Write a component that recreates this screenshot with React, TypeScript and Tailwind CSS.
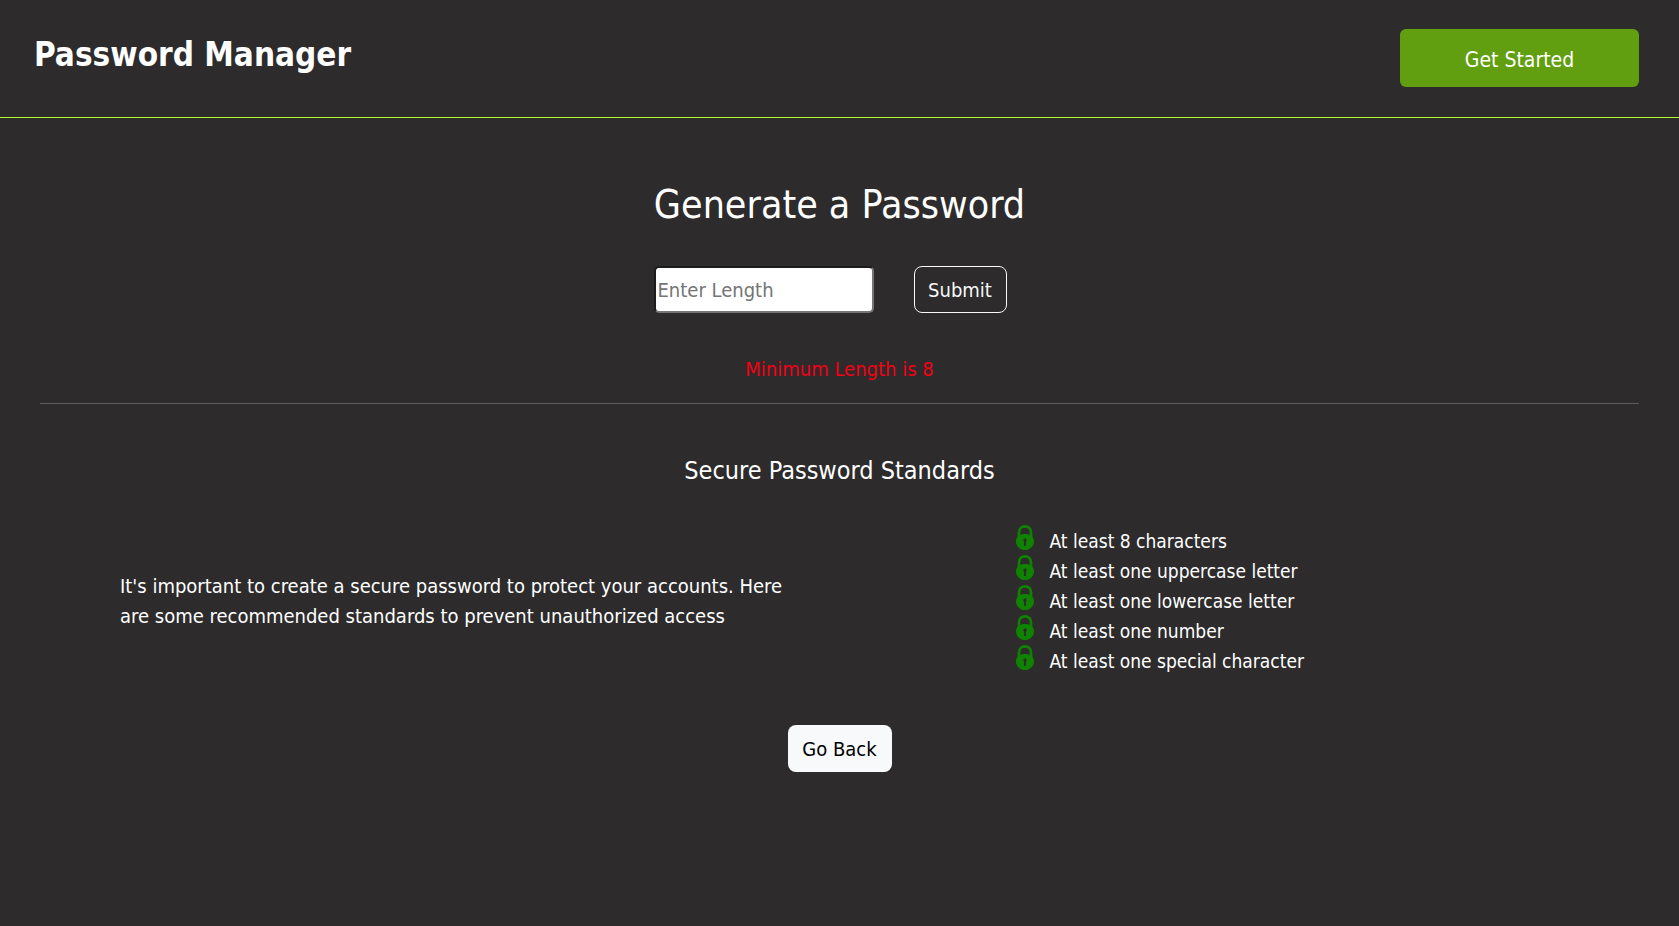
import { useState } from "react";

const standards = [
  "At least 8 characters",
  "At least one uppercase letter",
  "At least one lowercase letter",
  "At least one number",
  "At least one special character",
];

function LockIcon() {
  return (
    <svg width="18" height="25" viewBox="0 0 18 25" className="shrink-0" aria-hidden="true">
      <path
        d="M3 13V7.500C3 3.700 5.500 1.400 9 1.400s6 2.300 6 6.100V13"
        fill="none"
        stroke="#0f8200"
        strokeWidth="2.7"
      />
      <path
        d="M2.200 11.300C4 9.600 6.500 9 9 9s5 .6 6.800 2.300c1.500 1.300 2.200 3 2.200 4.900C18 21.300 14 25 9 25S0 21.300 0 16.200c0-1.900.7-3.600 2.200-4.900Z"
        fill="#0f8200"
      />
      <path d="M9 13.400a1.800 1.800 0 0 0-.9 3.300V21h1.800v-4.300A1.800 1.800 0 0 0 9 13.400Z" fill="#2d2b2c" />
    </svg>
  );
}

export default function App() {
  const [length, setLength] = useState("");

  return (
    <div className="min-h-screen bg-[#2d2b2c] font-['DejaVu_Sans_Condensed','DejaVu_Sans',sans-serif] text-xl leading-[30px] text-white">
      <header className="flex items-start justify-between border-b border-[#adff2f] pt-[29px] pr-10 pb-[30px] pl-[34px]">
        <h1 className="text-[33px] leading-[52px] font-bold">Password Manager</h1>
        <button type="button" className="h-[58px] w-[239px] rounded-md bg-[#619f11] pt-1 text-[21px]">
          Get Started
        </button>
      </header>

      <main className="px-10 pt-[62px] pb-10">
        <div className="mx-auto w-[372px]">
          <h2 className="text-center text-[39px] leading-[50px] whitespace-nowrap">Generate a Password</h2>
          <form className="mt-9 flex gap-10" onSubmit={(e) => e.preventDefault()}>
            <input
              type="text"
              aria-label="Password length"
              placeholder="Enter Length"
              value={length}
              onChange={(e) => setLength(e.target.value)}
              className="h-[47px] w-[220px] rounded-[5px] border-2 border-t-[#1c1c1c] border-r-[#767676] border-b-[#767676] border-l-[#1c1c1c] bg-white px-0.5 text-black placeholder:text-[#757575]"
            />
            <button type="submit" className="h-[47px] w-[93px] rounded-lg border border-[#f8f9fa] text-[#f8f9fa]">
              Submit
            </button>
          </form>
        </div>
        <p className="mt-10 text-center leading-8 text-[#f50014]">Minimum Length is 8</p>
        <hr className="mt-[18px] border-[#5f5d5e]" />

        <section>
          <h3 className="mt-[51px] text-center text-[25px] leading-8">Secure Password Standards</h3>
          <div className="mt-[38px] grid grid-cols-2 items-center">
            <p className="pt-0.5 pr-12 pl-20">
              It's important to create a secure password to protect your accounts. Here are some recommended standards
              to prevent unauthorized access
            </p>
            <ul className="pl-44 text-[19px] leading-8">
              {standards.map((text) => (
                <li key={text} className="flex h-[30px] items-start gap-4">
                  <LockIcon />
                  {text}
                </li>
              ))}
            </ul>
          </div>
        </section>

        <div className="mt-[50px] flex justify-center">
          <button type="button" className="h-[47px] w-[104px] rounded-lg bg-[#f8f9fa] text-black">
            Go Back
          </button>
        </div>
      </main>
    </div>
  );
}
